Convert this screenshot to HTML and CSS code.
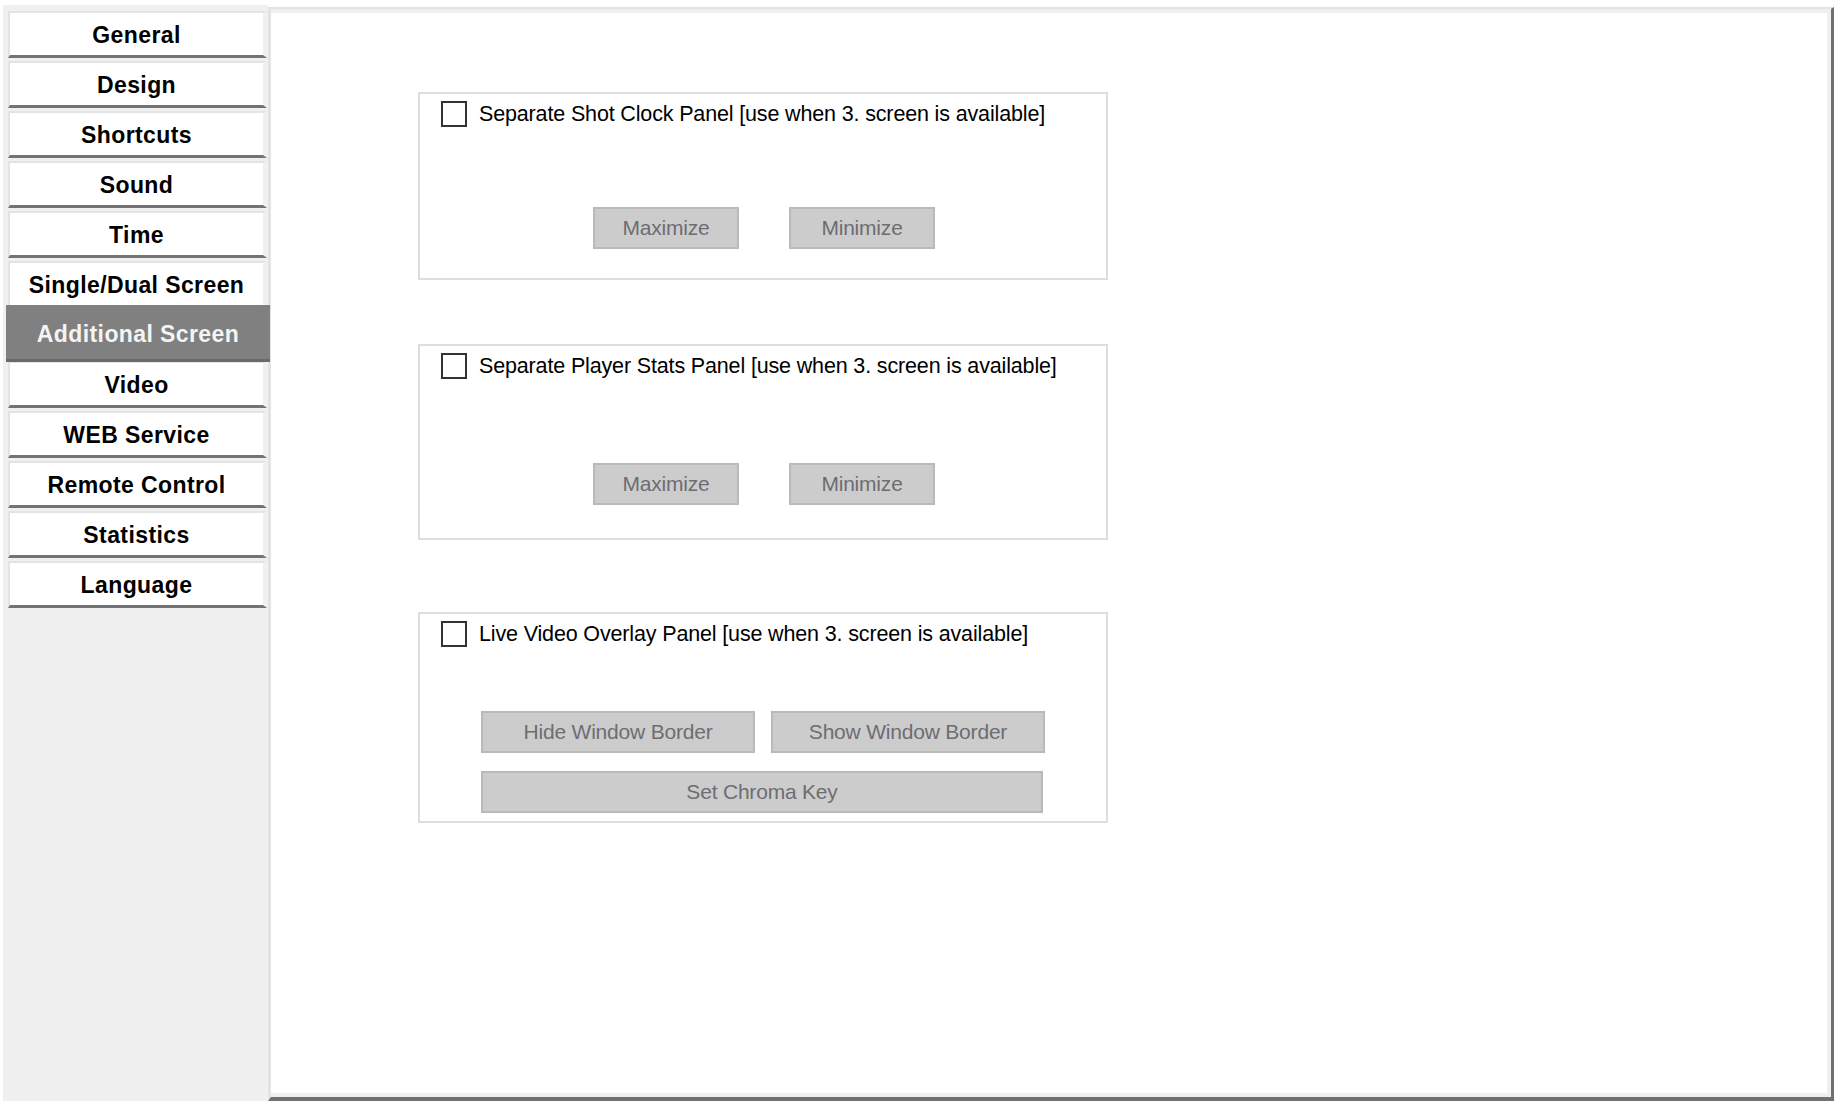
FILE: index.html
```html
<!DOCTYPE html>
<html lang="en">
<head>
    <meta charset="UTF-8">
    <meta name="viewport" content="width=device-width, initial-scale=1.0">
    <title>Settings - Additional Screen</title>
    <link rel="stylesheet" href="styles.css">
</head>
<body>
    <div class="window">
        <!-- Menú lateral -->
        <div class="sidebar">
            <div class="nav-item">General</div>
            <div class="nav-item">Design</div>
            <div class="nav-item">Shortcuts</div>
            <div class="nav-item">Sound</div>
            <div class="nav-item">Time</div>
            <div class="nav-item">Single/Dual Screen</div>
            <div class="nav-item active">Additional Screen</div>
            <div class="nav-item">Video</div>
            <div class="nav-item">WEB Service</div>
            <div class="nav-item">Remote Control</div>
            <div class="nav-item">Statistics</div>
            <div class="nav-item">Language</div>
        </div>

        <!-- Panel principal -->
        <div class="main">
            <div class="main-inner">
                <div class="group group-shot">
                    <label class="check-row">
                        <input type="checkbox">
                        <span>Separate Shot Clock Panel [use when 3. screen is available]</span>
                    </label>
                    <div class="btn-row btn-row-pair">
                        <button class="btn btn-small" disabled>Maximize</button>
                        <button class="btn btn-small" disabled>Minimize</button>
                    </div>
                </div>

                <div class="group group-stats">
                    <label class="check-row">
                        <input type="checkbox">
                        <span>Separate Player Stats Panel [use when 3. screen is available]</span>
                    </label>
                    <div class="btn-row btn-row-pair">
                        <button class="btn btn-small" disabled>Maximize</button>
                        <button class="btn btn-small" disabled>Minimize</button>
                    </div>
                </div>

                <div class="group group-video">
                    <label class="check-row">
                        <input type="checkbox">
                        <span>Live Video Overlay Panel [use when 3. screen is available]</span>
                    </label>
                    <div class="btn-row btn-row-wide">
                        <button class="btn btn-wide" disabled>Hide Window Border</button>
                        <button class="btn btn-wide" disabled>Show Window Border</button>
                    </div>
                    <div class="btn-row btn-row-full">
                        <button class="btn btn-full" disabled>Set Chroma Key</button>
                    </div>
                </div>
            </div>
        </div>
    </div>
</body>
</html>
```

FILE: styles.css
```css
/* Estilo general */
body {
    margin: 0;
    padding: 0;
    background: #ffffff;
    font-family: "Liberation Sans", Arial, sans-serif;
    color: #000;
}

.window {
    display: flex;
    align-items: flex-start;
    padding: 5px 0 0 3px;
    height: 1096px;
}

/* Menú lateral */
.sidebar {
    width: 265px;
    height: 1096px;
    box-sizing: border-box;
    background: #f0f0f0;
    padding: 6px 1px 0 5px;
    display: flex;
    flex-direction: column;
}

.nav-item {
    height: 47px;
    box-sizing: border-box;
    margin-bottom: 3px;
    padding-top: 2px;
    background: #ffffff;
    border-top: 2px solid #e3e3e3;
    border-left: 2px solid #e3e3e3;
    border-right: 4px solid #f0f0f0;
    border-bottom: 3px solid #737373;
    display: flex;
    align-items: center;
    justify-content: center;
    font-size: 23px;
    font-weight: bold;
    letter-spacing: 0.4px;
}

.nav-item.active {
    height: 57px;
    margin: -6px -3px -1px -2px;
    background: #808080;
    color: #f4f4f4;
    border: none;
    border-bottom: 3px solid #6a6a6a;
    z-index: 1;
    padding-top: 4px;
}

/* Panel principal */
.main {
    margin-top: 2px;
    width: 1566px;
    height: 1094px;
    box-sizing: border-box;
    border-top: 2px solid #e3e3e3;
    border-left: 3px solid #e3e3e3;
    border-right: 3px solid #707070;
    border-bottom: 4px solid #707070;
}

.main-inner {
    height: 100%;
    box-sizing: border-box;
    background: #ffffff;
    border-top: 4px solid #f0f0f0;
    border-right: 4px solid #f0f0f0;
    border-bottom: 4px solid #f0f0f0;
    padding: 79px 0 0 147px;
}

/* Grupos */
.group {
    width: 690px;
    box-sizing: border-box;
    border: 2px solid #dedede;
    padding: 7px 0 0 21px;
}

.group-shot {
    height: 188px;
}

.group-stats {
    margin-top: 64px;
    height: 196px;
}

.group-video {
    margin-top: 72px;
    height: 211px;
}

.check-row {
    display: flex;
    align-items: center;
    height: 26px;
    font-size: 21.5px;
    letter-spacing: -0.15px;
}

.check-row input {
    appearance: none;
    -webkit-appearance: none;
    width: 26px;
    height: 26px;
    margin: 0 12px 0 0;
    box-sizing: border-box;
    border: 2px solid #333333;
    background: #ffffff;
}

.btn-row {
    display: flex;
}

.group-shot .btn-row-pair {
    margin-top: 80px;
    padding-left: 152px;
    gap: 50px;
}

.group-stats .btn-row-pair {
    margin-top: 84px;
    padding-left: 152px;
    gap: 50px;
}

.btn-row-wide {
    margin-top: 64px;
    padding-left: 40px;
    gap: 16px;
}

.btn-row-full {
    margin-top: 18px;
    padding-left: 40px;
}

.btn {
    box-sizing: border-box;
    height: 42px;
    background: #cccccc;
    border: 2px solid #b9b9b9;
    color: #6d6d72;
    font-family: "Liberation Sans", Arial, sans-serif;
    font-size: 21px;
    letter-spacing: -0.2px;
    padding: 0;
}

.btn-small {
    width: 146px;
}

.btn-wide {
    width: 274px;
}

.btn-full {
    width: 562px;
}
```
